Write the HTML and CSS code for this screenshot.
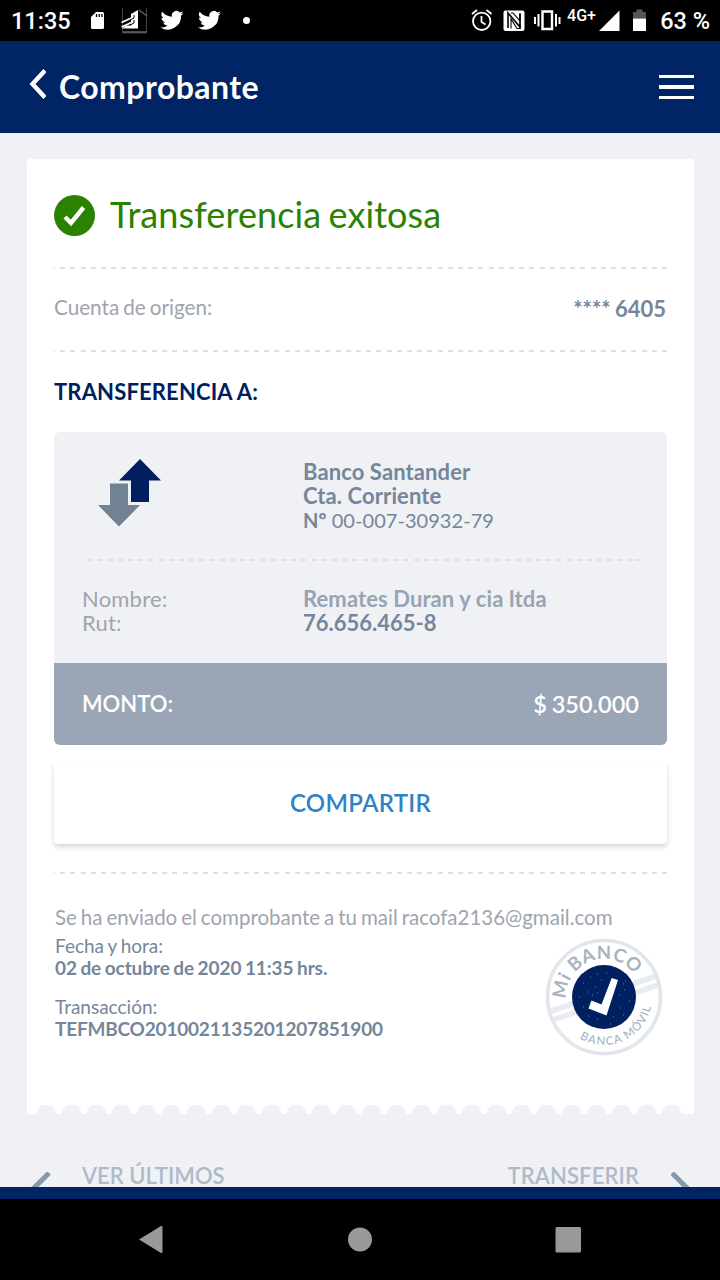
FILE: index.html
```html
<!DOCTYPE html>
<html lang="es">
<head>
<meta charset="utf-8">
<title>Comprobante</title>
<link rel="stylesheet" href="styles.css">
</head>
<body>
<div class="screen">
  <div class="status">
    <span class="clock">11:35</span>
    <svg class="status-left" width="170" height="41" viewBox="85 0 170 41" fill="#fff">
      <path d="M96 12h6.500q1.500 0 1.500 1.500V27.500q0 1.500-1.500 1.500H92.500q-1.500 0-1.500-1.500V17z"/>
      <path d="M96.500 14v3M99.200 14v3M101.900 14v3" stroke="#000" stroke-width="1.300"/>
      <path d="M122.500 8v25h24V8" fill="none" stroke="#444" stroke-width="1"/>
      <path d="M123 32h23.500M139 10l8 6" stroke="#666" stroke-width="1.300"/>
      <path d="M131 14l7-4v18.500h-16l4-3h5z"/>
      <path d="M121.500 22.500l11-5M121.500 27l11-5" stroke="#fff" stroke-width="1.800"/>
      <path d="M134 15v3l-4 2M134 20v3l-4 2" stroke="#000" fill="none"/>
      <path id="bird" transform="translate(160.500 8.800)" d="M23 4.400a9.400 9.400 0 0 1-2.700.7 4.700 4.700 0 0 0 2.100-2.600 9.500 9.500 0 0 1-3 1.100 4.700 4.700 0 0 0-8 4.300A13.400 13.400 0 0 1 1.700 3a4.700 4.700 0 0 0 1.400 6.300A4.700 4.700 0 0 1 1 8.700v.1a4.700 4.700 0 0 0 3.800 4.600 4.700 4.700 0 0 1-2.100.1 4.700 4.700 0 0 0 4.400 3.300A9.500 9.500 0 0 1 0 18.700 13.400 13.400 0 0 0 20.600 6.800 9.600 9.600 0 0 0 23 4.400z"/>
      <use href="#bird" x="37.500"/>
      <circle cx="246.500" cy="20.500" r="3.500"/>
    </svg>
    <svg class="status-right" width="180" height="41" viewBox="468 0 180 41">
      <g fill="none" stroke="#fff" stroke-width="1.800">
        <circle cx="481.700" cy="21.300" r="8.700"/>
        <path d="M481.500 16v6l4 2.500M472 14l5-4M491.500 14l-5-4"/>
        <path d="M542.500 11.500h9.500v17.500h-9.500z" stroke-width="2.400"/>
        <path d="M538.500 14v12.500M535 17v7M556 14v12.500M559.500 17v7" stroke-width="2"/>
      </g>
      <rect x="503.500" y="10.500" width="21" height="20.500" rx="2" fill="#fff"/>
      <path d="M508 28V13l12 14V14" fill="none" stroke="#000" stroke-width="1.600"/>
      <path d="M511 28.500V19l6 9.500M511 13h2l7 8V13M517 28.500h3V24" fill="none" stroke="#000" stroke-width="1.100"/>
      <text x="567" y="21" class="network" textLength="29" lengthAdjust="spacingAndGlyphs">4G+</text>
      <path d="M619.500 10.500V31H599z" fill="#fff"/>
      <path d="M633 12h3.500V9.500h6V12h3.500v6.500h-13z" fill="#555"/>
      <path d="M633 18.500h13V31h-13z" fill="#fff"/>
    </svg>
    <span class="battery">63 %</span>
  </div>
  <header class="header">
    <svg class="back" width="18" height="30" viewBox="0 0 18 30"><path d="M17 1.500L4.500 15 17 28.500" fill="none" stroke="#fff" stroke-width="4.400"/></svg>
    <h1 class="header-title">Comprobante</h1>
    <div class="menu"><i></i><i></i><i></i></div>
  </header>
  <main class="content">
    <section class="card">
      <div class="success">
        <svg width="41" height="41" viewBox="0 0 41 41"><circle cx="20.500" cy="20.500" r="20.500" fill="#2a8200"/><path d="M11 22l6 6L29.500 12.500" fill="none" stroke="#fff" stroke-width="4.400"/></svg>
        <span class="success-text">Transferencia exitosa</span>
      </div>
      <div class="dash"></div>
      <div class="origin"><span class="origin-label">Cuenta de origen:</span><b class="origin-value">**** 6405</b></div>
      <div class="dash"></div>
      <h2 class="section-title"><span>TRANSFERENCIA A:</span></h2>
      <div class="recipient">
        <div class="bank">
          <div class="bank-icon"><svg width="63" height="68" viewBox="0 0 63 68"><path d="M42 0l21 21.500H51V43H33V21.500H21z" fill="#001e60"/><path d="M12 24.500h18V46h12L21 67.500 0 46h12z" fill="#708293"/></svg></div>
          <div class="details"><b>Banco Santander</b><br><b class="account-type">Cta. Corriente</b><br><span class="account"><b>Nº</b> 00-007-30932-79</span></div>
        </div>
        <div class="dash inner"></div>
        <div class="person">
          <div class="labels">Nombre:<br>Rut:</div>
          <div class="details"><b class="name">Remates Duran y cia ltda</b><br><b class="rut">76.656.465-8</b></div>
        </div>
        <div class="amount"><b class="amount-label">MONTO:</b><b class="amount-value">$ 350.000</b></div>
      </div>
      <button class="share">COMPARTIR</button>
      <div class="dash"></div>
      <div class="receipt">
        <p class="mail">Se ha enviado el comprobante a tu mail racofa2136@gmail.com</p>
        <div class="receipt-row">
          <div class="meta">
            <p>Fecha y hora:<br><b class="date">02 de octubre de 2020 11:35 hrs.</b></p>
            <p>Transacción:<br><b class="transaction">TEFMBCO2010021135201207851900</b></p>
          </div>
          <svg class="stamp" width="118" height="118" viewBox="0 0 118 118">
            <defs><path id="top" d="M21 59a38 38 0 0 1 76 0"/><path id="bottom" d="M11 59a48 48 0 0 0 96 0"/><clipPath id="ring"><circle cx="59" cy="59" r="56"/></clipPath></defs>
            <path d="M0 75l118-39M0 84.500l118-39" stroke="#e8ebef" stroke-width="5.500" clip-path="url(#ring)"/>
            <circle cx="59" cy="59" r="56.500" fill="none" stroke="#e2e5eb" stroke-width="3.500"/>
            <circle cx="59" cy="59" r="32" fill="#00205f"/>
            <path d="M66.700 40l6.300 2-11.500 35.500L43.500 70.500l3-8 10 4z" fill="#fff"/>
            <path d="M38 45h1M45 39h1M52 36h1M61 35h1M78 46h1M79 52h1M84 63h1M75 70h1M68 79h1M52 81h1M43 78h1M38 69h1M34 59h1M42 54h1M50 49h1M56 42h1M65 86h1M78 77h1M47 57h1M80 43h1M74 57h1M52 55h1" stroke="#6c80a8" stroke-width="1"/>
            <text class="stamp-name" transform="rotate(-19.500 59 59)"><textPath href="#top" startOffset="50%" text-anchor="middle">Mi BANCO</textPath></text>
            <text class="stamp-channel" transform="rotate(-24.500 59 59)"><textPath href="#bottom" startOffset="50%" text-anchor="middle">BANCA MÓVIL</textPath></text>
          </svg>
        </div>
      </div>
      <svg class="edge" width="667" height="9" viewBox="0 0 667 9">
        <defs><pattern id="scallop" x="-5.500" width="25.010" height="9" patternUnits="userSpaceOnUse"><path d="M14.500 9Q17 1 21.500 0h7Q33 1 35 9zM-10.510 9Q-8 1-3.510 0h7Q8 1 10 9z" fill="#f0f1f5"/></pattern></defs>
        <path d="M6 0h651v9H6z" fill="url(#scallop)"/>
      </svg>
    </section>
    <div class="actions">
      <svg width="20" height="40" viewBox="0 0 20 40"><path d="M18 1L1 18l17 17" fill="none" stroke="#8798aa" stroke-width="5"/></svg>
      <b class="latest">VER ÚLTIMOS</b>
      <b class="transfer">TRANSFERIR</b>
      <svg width="20" height="40" viewBox="0 0 20 40"><path d="M1 1l17 17L1 35" fill="none" stroke="#8798aa" stroke-width="5"/></svg>
    </div>
  </main>
  <div class="footer-strip"></div>
  <nav class="navbar">
    <svg width="720" height="81" viewBox="0 0 720 81" fill="#999">
      <path d="M139 40.500L161 27q1.500-.5 1.500 1v25q0 1.500-1.500 1z"/><circle cx="360" cy="40.500" r="12"/><rect x="555.500" y="28" width="25.500" height="25.500" rx="1.500"/>
    </svg>
  </nav>
</div>
</body>
</html>
```
FILE: styles.css
```css
* { box-sizing: border-box; }
body { margin: 0; font-family: Lato, sans-serif; background: #000; }
p, h1, h2 { margin: 0; }
b { font-weight: 700; }
.screen { width: 720px; height: 1280px; display: flex; flex-direction: column; overflow: hidden; }
.status { height: 41px; flex: none; background: #000; color: #fff; display: flex; align-items: center; padding: 0 10px 0 11px; font: 500 23.500px/41px Roboto, sans-serif; }
.clock { width: 74px; padding-top: 2px; }
.status-left { flex: none; }
.status-right { flex: none; margin-left: auto; }
.battery { width: 62px; padding-top: 2px; text-align: right; white-space: nowrap; flex: none; }
.network { font: 500 16px Roboto, sans-serif; fill: #fff; }
.header { height: 92px; flex: none; background: #002464; color: #fff; display: flex; align-items: center; padding: 0 26px 0 28px; }
.back { margin-right: 13px; margin-top: -6px; }
.header-title { font-size: 32px; line-height: 40px; font-weight: 700; letter-spacing: .45px; }
.menu { margin-left: auto; width: 35px; display: flex; flex-direction: column; gap: 7px; }
.menu i { height: 3.300px; background: #fff; }
.content { flex: 1; min-height: 0; overflow: hidden; background: #f0f1f5; padding: 26px 26px 0 27px; }
.card { background: #fff; height: 955px; padding: 0 27px; display: flex; flex-direction: column; border-radius: 3px 3px 0 0; }
.dash { height: 2px; flex: none; background: repeating-linear-gradient(90deg, #e0e0e1 0 5px, transparent 5px 10.200px); background-position-x: -4px; }
.success { height: 108px; display: flex; align-items: center; gap: 15px; padding-top: 5px; color: #2a8200; }
.success-text { font-size: 36px; line-height: 44px; margin-top: -2px; white-space: nowrap; letter-spacing: .1px; word-spacing: -2px; }
.origin { height: 82px; display: flex; align-items: center; justify-content: space-between; color: #a0a4ae; }
.origin-label { font-size: 20.700px; word-spacing: -1.300px; margin-top: -4px; }
.origin-value { font-size: 22px; color: #75869a; word-spacing: -1px; margin: -2px 1px 0 0; }
.section-title { height: 80px; display: flex; align-items: center; font-size: 22px; line-height: 26px; color: #001e60; font-weight: 700; letter-spacing: .15px; }
.recipient { height: 313px; flex: none; border-radius: 6px; overflow: hidden; background: #f0f1f5; font-size: 22px; line-height: 24px; color: #75869a; display: flex; flex-direction: column; }
.bank { height: 127px; padding: 27px 27px 0 28px; display: flex; }
.bank-icon { width: 221px; padding-left: 16px; }
.details { white-space: nowrap; padding-top: 1px; letter-spacing: .1px; }
.labels { width: 221px; padding-top: 1px; color: #a0a4ae; letter-spacing: .2px; }
.account { display: inline-block; font-size: 20px; line-height: 23px; letter-spacing: .05px; }
.inner { margin: 0 27px; }
.person { height: 102px; padding: 25px 27px 0 28px; display: flex; }
.details .name { color: #97a4b4; }
.details .rut { letter-spacing: 0; }
.amount { flex: 1; background: #9aa6b6; color: #fff; padding: 0 28px; display: flex; align-items: center; justify-content: space-between; }
.amount-label { font-weight: 600; }
.amount-value { font-size: 23.500px; word-spacing: -1px; font-weight: 600; }
.share { height: 82px; flex: none; margin: 17px 0 28px; border: 0; border-radius: 4px; background: #fff; box-shadow: 0 3px 5px rgba(0,0,0,.16); color: #2e82c8; font: 600 24px/30px Lato, sans-serif; letter-spacing: .3px; }
.receipt { height: 231px; padding: 31px 0 0 1px; flex: none; color: #75869a; font-size: 19px; line-height: 22px; white-space: nowrap; }
.mail { font-size: 20.500px; line-height: 24px; color: #a0a4ae; word-spacing: -1.300px; }
.receipt-row { display: flex; justify-content: space-between; padding-right: 4px; }
.meta { padding-top: 6px; display: flex; flex-direction: column; gap: 17px; word-spacing: -1px; }
.date { letter-spacing: -.08px; }
.transaction { letter-spacing: -.2px; }
.stamp { margin-top: 9px; }
.stamp-name { font: 700 18.500px Lato, sans-serif; fill: #a9b3c1; letter-spacing: .6px; }
.stamp-channel { font: 500 11.500px Lato, sans-serif; fill: #a9b3c1; letter-spacing: 1.200px; }
.edge { flex: none; margin: 0 -27px; }
.actions { display: flex; padding: 51px 0 0 4px; align-items: flex-start; font-size: 22px; line-height: 21px; color: #afbac8; }
.actions svg { margin-top: 7px; flex: none; }
.actions b { font-weight: 600; }
.latest { margin-left: 31px; }
.transfer { margin-left: auto; margin-right: 32px; letter-spacing: .1px; }
.actions svg:last-child { margin-right: 3px; }
.footer-strip { height: 12px; flex: none; background: #002464; }
.navbar { height: 81px; flex: none; background: #000; }
```
